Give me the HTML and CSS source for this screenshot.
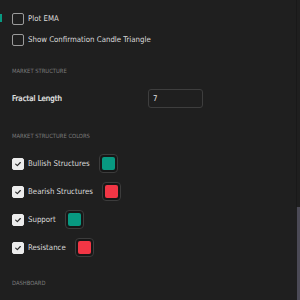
FILE: index.html
```html
<!DOCTYPE html>
<html lang="en">
<head>
    <meta charset="UTF-8">
    <title>Indicator Settings</title>
    <link rel="stylesheet" href="styles.css">
</head>
<body>
    <div class="side-tab"></div>

    <div class="panel">
        <label class="check-row">
            <span class="box"></span>
            <span class="text">Plot EMA</span>
        </label>
        <label class="check-row">
            <span class="box"></span>
            <span class="text">Show Confirmation Candle Triangle</span>
        </label>

        <div class="section">MARKET STRUCTURE</div>

        <div class="input-row">
            <span class="label">Fractal Length</span>
            <div class="num-input">7</div>
        </div>

        <div class="section second">MARKET STRUCTURE COLORS</div>

        <div class="color-list">
            <div class="color-row">
                <span class="box checked"><svg viewBox="0 0 12 12"><path d="M3.2 6.2 L5.2 8 L8.8 4.2" /></svg></span>
                <span class="text">Bullish Structures</span>
                <span class="swatch"><span class="fill bull"></span></span>
            </div>
            <div class="color-row">
                <span class="box checked"><svg viewBox="0 0 12 12"><path d="M3.2 6.2 L5.2 8 L8.8 4.2" /></svg></span>
                <span class="text">Bearish Structures</span>
                <span class="swatch"><span class="fill bear"></span></span>
            </div>
            <div class="color-row">
                <span class="box checked"><svg viewBox="0 0 12 12"><path d="M3.2 6.2 L5.2 8 L8.8 4.2" /></svg></span>
                <span class="text">Support</span>
                <span class="swatch"><span class="fill bull"></span></span>
            </div>
            <div class="color-row">
                <span class="box checked"><svg viewBox="0 0 12 12"><path d="M3.2 6.2 L5.2 8 L8.8 4.2" /></svg></span>
                <span class="text">Resistance</span>
                <span class="swatch"><span class="fill bear"></span></span>
            </div>
        </div>

        <div class="section third">DASHBOARD</div>
    </div>

    <div class="scroll-track"></div>
    <div class="scroll-thumb"></div>
</body>
</html>
```

FILE: styles.css
```css
html, body {
    margin: 0;
    padding: 0;
    height: 100%;
    overflow: hidden;
}
body {
    background-color: #1f1f1f;
    font-family: "DejaVu Sans Condensed", "Liberation Sans", sans-serif;
    color: #d6d6d6;
    position: relative;
}
.side-tab {
    position: absolute;
    left: 0;
    top: 14px;
    width: 2px;
    height: 8px;
    background-color: #089981;
}
.panel {
    display: flex;
    flex-direction: column;
    padding: 8px 0 0 12px;
}
.check-row {
    display: flex;
    align-items: center;
    height: 21px;
    gap: 4px;
}
.box {
    width: 12px;
    height: 12px;
    box-sizing: border-box;
    border: 1px solid #9b9b9b;
    border-radius: 2px;
    flex: none;
}
.box.checked {
    background-color: #ececec;
    border-color: #ececec;
}
.box svg {
    display: block;
    width: 10px;
    height: 10px;
}
.box path {
    fill: none;
    stroke: #2a2a2a;
    stroke-width: 1.4;
    stroke-linecap: round;
    stroke-linejoin: round;
}
.text {
    font-size: 7.8px;
    color: #dcdcdc;
    white-space: nowrap;
}
.section {
    font-size: 5.8px;
    line-height: 10px;
    height: 10px;
    color: #7c7c7c;
    margin-top: 16px;
}
.section.second {
    margin-top: 23px;
}
.section.third {
    margin-top: 21px;
}
.input-row {
    display: flex;
    align-items: center;
    height: 19px;
    margin-top: 13px;
}
.label {
    width: 136px;
    font-size: 7.8px;
    color: #f2f2f2;
    -webkit-text-stroke: 0.2px #f2f2f2;
}
.num-input {
    width: 55px;
    height: 19px;
    box-sizing: border-box;
    border: 1px solid #3e3e3e;
    border-radius: 3px;
    font-size: 7.8px;
    color: #e6e6e6;
    padding-left: 4px;
    display: flex;
    align-items: center;
}
.color-list {
    display: flex;
    flex-direction: column;
    gap: 9px;
    margin-top: 13px;
}
.color-row {
    display: flex;
    align-items: center;
    height: 19px;
    gap: 4px;
}
.swatch {
    width: 19px;
    height: 19px;
    box-sizing: border-box;
    border: 1px solid #3c3c3c;
    border-radius: 4px;
    padding: 2px;
    margin-left: 5px;
    background-color: #171717;
}
.fill {
    display: block;
    width: 100%;
    height: 100%;
    border-radius: 2px;
}
.fill.bull {
    background-color: #089981;
}
.fill.bear {
    background-color: #f23645;
}
.scroll-track {
    position: absolute;
    top: 0;
    right: 3px;
    width: 1px;
    height: 207px;
    background-color: #191919;
}
.scroll-thumb {
    position: absolute;
    top: 207px;
    right: 0;
    width: 3px;
    height: 93px;
    background-color: #4b4a56;
}
```
